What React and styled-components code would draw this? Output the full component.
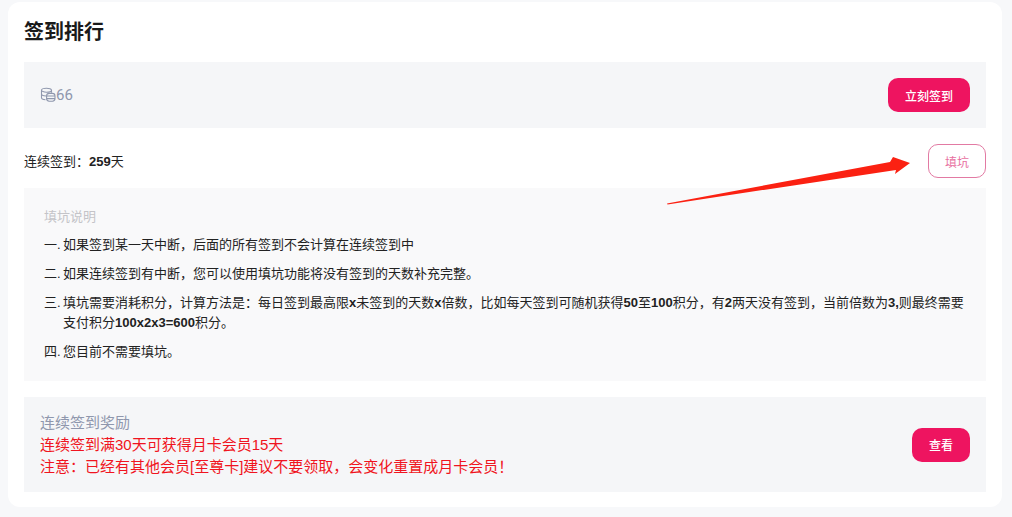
import React from 'react';
import styled, {createGlobalStyle} from 'styled-components';

const fontStack = '"Liberation Sans", "Noto Sans CJK SC", sans-serif';

const GlobalStyle = createGlobalStyle`
    html, body {
        margin: 0;
        padding: 0;
        background: #f7f8fa;
        font-family: ${fontStack};
    }
`;

const Page = styled.div`
    position: relative;
    width: 1012px;
    height: 517px;
    padding: 2px 10px 0 8px;
    box-sizing: border-box;
    overflow: hidden;
`;

const Card = styled.div`
    height: 505px;
    padding: 0 16px;
    box-sizing: border-box;
    background: #fff;
    border-radius: 12px;
`;

const Title = styled.h2`
    margin: 0;
    height: 60px;
    line-height: 61px;
    font-size: 20px;
    font-weight: 700;
    color: #1a1a1a;
`;

const Panel = styled.div`
    display: flex;
    align-items: center;
    justify-content: space-between;
    background: #f5f6f8;
    padding: 0 16px;
`;

const PointsPanel = styled(Panel)`
    height: 66px;
`;

const Points = styled.div`
    display: flex;
    align-items: center;
    font-family: "Roboto", sans-serif;
    font-size: 15px;
    font-weight: 400;
    color: #8f97ad;
`;

const PrimaryButton = styled.button`
    width: ${p => p.$width}px;
    height: 34px;
    padding: 0;
    border: 0;
    border-radius: 10px;
    background: #ee1460;
    color: #fff;
    font-family: ${fontStack};
    font-size: 12px;
    font-weight: 500;
`;

const StreakRow = styled.div`
    display: flex;
    align-items: center;
    justify-content: space-between;
    height: 60px;
    padding-top: 6px;
    box-sizing: border-box;
    font-size: 13px;
    color: #222;
`;

const StreakText = styled.span`
    margin-bottom: 2px;
`;

const OutlineButton = styled.button`
    width: 58px;
    height: 34px;
    padding: 0;
    border: 1px solid #e27aa3;
    border-radius: 10px;
    background: #fff;
    color: #e8709f;
    font-family: ${fontStack};
    font-size: 12px;
`;

const Notes = styled.div`
    height: 193px;
    padding: 20px 20px 0;
    box-sizing: border-box;
    background: #f9f9fa;
    font-size: 13px;
    color: #222;
`;

const NotesTitle = styled.div`
    height: 18px;
    line-height: 18px;
    margin-bottom: 9px;
    color: #c4c4c8;
`;

const NoteList = styled.ol`
    margin: 0;
    padding: 0;
    list-style: none;
`;

const Note = styled.li`
    display: flex;
    line-height: 20px;
    margin-bottom: 9px;
`;

const NoteMark = styled.span`
    flex: none;
    width: 19px;
`;

const RewardPanel = styled(Panel)`
    height: 95px;
    margin-top: 16px;
`;

const RewardText = styled.div`
    font-size: 15px;
    line-height: 22px;
    color: #f01420;
`;

const RewardTitle = styled.div`
    color: #8f97ad;
`;

const Arrow = styled.svg`
    position: absolute;
    left: 660px;
    top: 150px;
`;

function CoinsIcon() {
    return (
        <svg width="16" height="16" viewBox="0 0 16 16" fill="none" stroke="#8f97ad" strokeWidth="1.1">
            <ellipse cx="6.5" cy="3.2" rx="5" ry="2" />
            <path d="M1.5 3.2v7.6c0 1 1.7 1.8 4 2M1.5 7c0 1 1.7 1.9 4.5 2M11.5 3.2v2.6" />
            <rect x="6.6" y="6.4" width="8.4" height="7.8" rx="2.6" />
            <path d="M6.6 9h8.4M6.6 11.6h8.4" />
        </svg>
    );
}

export default function App() {
    return (
        <Page>
            <GlobalStyle />
            <Card>
                <Title>签到排行</Title>
                <PointsPanel>
                    <Points><CoinsIcon />66</Points>
                    <PrimaryButton $width={82}>立刻签到</PrimaryButton>
                </PointsPanel>
                <StreakRow>
                    <StreakText>连续签到：<b>259</b>天</StreakText>
                    <OutlineButton>填坑</OutlineButton>
                </StreakRow>
                <Notes>
                    <NotesTitle>填坑说明</NotesTitle>
                    <NoteList>
                        <Note><NoteMark>一.</NoteMark><span>如果签到某一天中断，后面的所有签到不会计算在连续签到中</span></Note>
                        <Note><NoteMark>二.</NoteMark><span>如果连续签到有中断，您可以使用填坑功能将没有签到的天数补充完整。</span></Note>
                        <Note>
                            <NoteMark>三.</NoteMark>
                            <span>填坑需要消耗积分，计算方法是：每日签到最高限<b>x</b>未签到的天数<b>x</b>倍数，比如每天签到可随机获得<b>50</b>至<b>100</b>积分，有<b>2</b>两天没有签到，当前倍数为<b>3,</b>则最终需要支付积分<b>100x2x3=600</b>积分。</span>
                        </Note>
                        <Note><NoteMark>四.</NoteMark><span>您目前不需要填坑。</span></Note>
                    </NoteList>
                </Notes>
                <RewardPanel>
                    <RewardText>
                        <RewardTitle>连续签到奖励</RewardTitle>
                        <div>连续签到满30天可获得月卡会员15天</div>
                        <div>注意：已经有其他会员[至尊卡]建议不要领取，会变化重置成月卡会员！</div>
                    </RewardText>
                    <PrimaryButton $width={58}>查看</PrimaryButton>
                </RewardPanel>
            </Card>
            <Arrow width="260" height="60" viewBox="0 0 260 60">
                <path d="M7 53.4 L230 12 L233 7 L250 13 L235 24 L236 20 L7.5 54.4 Z" fill="#fb2112" />
            </Arrow>
        </Page>
    );
}
